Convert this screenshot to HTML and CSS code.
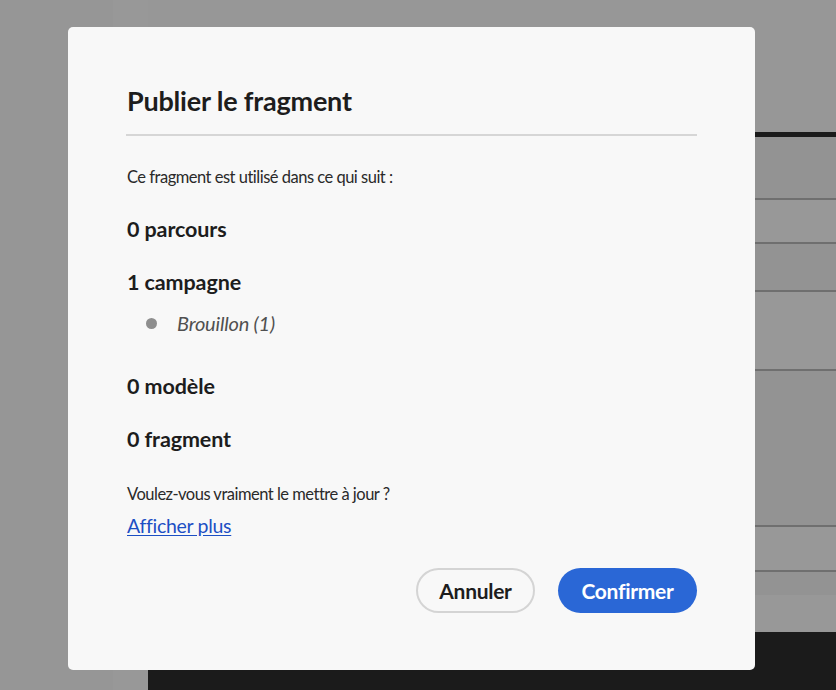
FILE: index.html
```html
<!DOCTYPE html>
<html lang="fr">
<head>
<meta charset="utf-8">
<title>Publier le fragment</title>
<link rel="stylesheet" href="styles.css">
</head>
<body>
<div class="page">
  <div class="side-a"></div>
  <div class="side-b"></div>
  <div class="main">
    <div class="main-top"></div>
    <div class="main-rule"></div>
    <div class="row r1"></div>
    <div class="row r2"></div>
    <div class="row r3"></div>
    <div class="row r4"></div>
    <div class="row r5"></div>
    <div class="row r6"></div>
    <div class="row r7 plain"></div>
    <div class="row r8 plain"></div>
    <div class="footer"></div>
  </div>
</div>

<div class="dialog" role="dialog" aria-labelledby="dlg-title">
  <h2 class="title" id="dlg-title">Publier le fragment</h2>
  <hr class="divider">
  <p class="text intro">Ce fragment est utilisé dans ce qui suit :</p>
  <h3 class="count c1">0 parcours</h3>
  <h3 class="count">1 campagne</h3>
  <ul class="items">
    <li class="item"><span class="dot"></span><span class="item-label">Brouillon (1)</span></li>
  </ul>
  <h3 class="count c3">0 modèle</h3>
  <h3 class="count">0 fragment</h3>
  <p class="text question">Voulez-vous vraiment le mettre à jour ?</p>
  <a class="more" href="#">Afficher plus</a>
  <div class="actions">
    <button class="btn btn-secondary">Annuler</button>
    <button class="btn btn-primary">Confirmer</button>
  </div>
</div>
</body>
</html>
```

FILE: styles.css
```css
* { box-sizing: border-box; }
html, body {
  margin: 0;
  padding: 0;
  width: 836px;
  height: 690px;
  overflow: hidden;
  font-family: Lato, "Noto Sans", "Liberation Sans", sans-serif;
}
body { background: #979797; }

.page {
  display: grid;
  grid-template-columns: 113px 35px 1fr;
  height: 690px;
}
.side-a { background: #969696; }
.side-b { background: #989898; }
.main {
  display: flex;
  flex-direction: column;
}
.main-top { height: 132px; background: #979797; }
.main-rule { height: 5px; background: #1b1b1b; }
.row { border-bottom: 2px solid #6f6f6f; background: #939393; }
.row.plain { border-bottom: 0; }
.r1 { height: 63px; }
.r2 { height: 44px; background: #989898; }
.r3 { height: 48px; }
.r4 { height: 79px; background: #989898; }
.r5 { height: 156px; }
.r6 { height: 45px; background: #989898; }
.r7 { height: 23px; }
.r8 { height: 37px; background: #989898; }
.footer { flex: 1; background: #1b1b1b; }

.dialog {
  position: absolute;
  left: 68px;
  top: 27px;
  width: 687px;
  height: 643px;
  background: #f8f8f8;
  border-radius: 5px;
  padding: 59px 58px 57px 59px;
  display: flex;
  flex-direction: column;
  align-items: flex-start;
  color: #222;
}
.title {
  margin: 0;
  font-size: 27px;
  line-height: 30px;
  font-weight: 700;
  letter-spacing: -0.2px;
  color: #1d1d1d;
}
.divider {
  align-self: stretch;
  margin: 18px 0 0 -1px;
  border: 0;
  height: 2px;
  background: #d6d6d6;
}
.text {
  margin: 0;
  font-size: 16.5px;
  line-height: 24px;
  letter-spacing: -0.5px;
  color: #2a2a2a;
}
.intro { margin-top: 29px; }
.count {
  margin: 27px 0 0 0;
  font-size: 21.5px;
  line-height: 26px;
  font-weight: 700;
  letter-spacing: -0.1px;
  color: #1d1d1d;
}
.items {
  list-style: none;
  margin: 16px 0 0 0;
  padding: 0 0 0 19px;
}
.item {
  display: flex;
  align-items: center;
  gap: 20px;
  height: 24px;
}
.dot {
  width: 11px;
  height: 11px;
  border-radius: 50%;
  background: #8e8e8e;
}
.item-label {
  font-style: italic;
  font-size: 20px;
  letter-spacing: -0.2px;
  color: #505050;
}
.count.c3 { margin-top: 38px; }
.question { margin-top: 30px; }
.more {
  margin-top: 8px;
  font-size: 19.5px;
  line-height: 24px;
  letter-spacing: -0.3px;
  color: #1c4fc4;
  text-decoration: underline;
  text-underline-offset: 2px;
}
.actions {
  align-self: stretch;
  display: flex;
  justify-content: flex-end;
  gap: 23px;
  margin-top: 30px;
}
.btn {
  height: 45px;
  border-radius: 23px;
  font-family: inherit;
  font-size: 21px;
  font-weight: 700;
  letter-spacing: -0.3px;
  padding: 0;
  cursor: pointer;
}
.btn-secondary {
  width: 119px;
  background: #f8f8f8;
  border: 2px solid #d4d4d4;
  color: #1d1d1d;
}
.btn-primary {
  width: 139px;
  background: #2a67d6;
  border: 0;
  color: #fff;
}
```
